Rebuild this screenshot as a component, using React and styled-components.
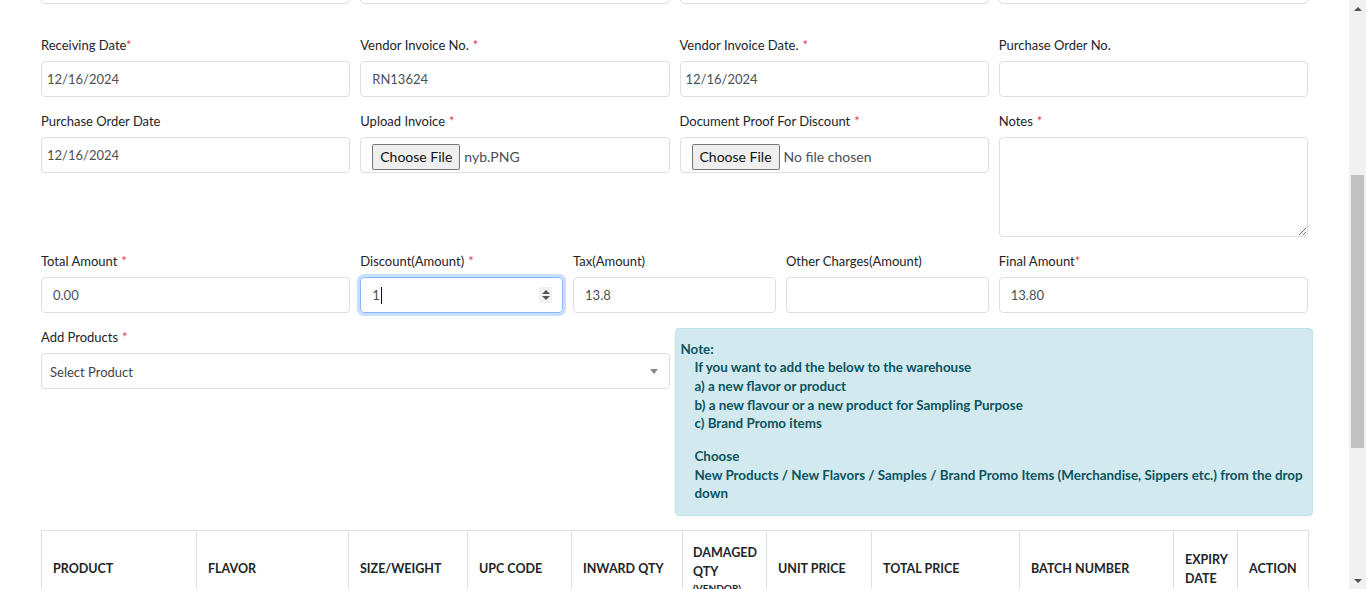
import React, { useLayoutEffect, useRef } from "react";
import styled, { createGlobalStyle } from "styled-components";

const GlobalStyle = createGlobalStyle`
  html, body {
    margin: 0;
    padding: 0;
    height: 100%;
    overflow: hidden;
    background: #fff;
  }
  body {
    font-family: Lato, "Liberation Sans", Arial, sans-serif;
    color: #212529;
  }
  * { box-sizing: border-box; }
`;

const Page = styled.div`
  display: flex;
  height: 100vh;
  width: 100vw;
`;

const Main = styled.div`
  flex: 1;
  overflow: hidden;
`;

const Form = styled.div`
  padding: 20px 41px 120px;
`;

const Section = styled.div`
  margin-top: ${(p) => p.$top || 0}px;
`;

const Row = styled.div`
  display: grid;
  grid-template-columns: repeat(12, 1fr);
  column-gap: 10px;
  margin-bottom: 13.5px;
  align-items: start;
`;

const Field = styled.div`
  grid-column: span ${(p) => p.$span || 3};
  display: flex;
  flex-direction: column;
`;

const Label = styled.label`
  font-size: 13px;
  line-height: 20px;
  height: 20px;
  margin-bottom: 6.5px;
  color: #212529;
  white-space: nowrap;
`;

const Req = styled.span`
  color: #e0404f;
  margin-left: ${(p) => (p.$tight ? "0" : "4px")};
`;

const Input = styled.input`
  height: 36px;
  width: 100%;
  border: 1px solid #dcdfe3;
  border-radius: 4px;
  padding: 0 ${(p) => p.$pad || 11}px;
  font-family: inherit;
  font-size: 13px;
  color: #495057;
  background: #fff;
  outline: none;
`;

const FocusBox = styled.div`
  height: 36px;
  border: 1px solid #86b7fe;
  border-radius: 4px;
  box-shadow: 0 0 0 3px rgba(13, 110, 253, 0.22);
  display: flex;
  align-items: center;
  padding: 0 11px;
  font-size: 13px;
  color: #495057;
`;

const Caret = styled.span`
  display: inline-block;
  width: 1px;
  height: 17px;
  background: #111;
  margin-left: 1px;
`;

const Grow = styled.span`
  flex: 1;
`;

const Spinner = styled.span`
  width: 13px;
  height: 16px;
  background: #f1f1f1;
  display: flex;
  flex-direction: column;
  align-items: center;
  justify-content: center;
  gap: 2px;
  margin-right: -1px;
`;

const Tri = styled.span`
  width: 0;
  height: 0;
  border-left: 4px solid transparent;
  border-right: 4px solid transparent;
  ${(p) =>
    p.$down
      ? "border-top: 4px solid #555;"
      : "border-bottom: 4px solid #555;"}
`;

const FileBox = styled.div`
  height: 36px;
  border: 1px solid #dcdfe3;
  border-radius: 4px;
  display: flex;
  align-items: center;
  padding: 3px 11px 0;
  font-size: 14px;
  color: #495057;
`;

const FileButton = styled.span`
  height: 26px;
  padding: 0 7px;
  display: flex;
  align-items: center;
  background: #efefef;
  border: 1px solid #767676;
  border-radius: 2px;
  color: #111;
  font-size: 14px;
  margin-right: 4px;
`;

const TextArea = styled.textarea`
  height: 100px;
  width: 100%;
  border: 1px solid #dcdfe3;
  border-radius: 4px;
  font-family: inherit;
  font-size: 13px;
  outline: none;
`;

const SelectBox = styled.div`
  height: 36px;
  border: 1px solid #dcdfe3;
  border-radius: 4px;
  display: flex;
  align-items: center;
  padding: 1px 10px 0 8px;
  font-size: 13px;
  color: #444;
`;

const SelectArrow = styled.span`
  width: 0;
  height: 0;
  border-left: 4px solid transparent;
  border-right: 4px solid transparent;
  border-top: 5px solid #888;
  margin-right: 1px;
`;

const Note = styled.div`
  grid-column: span 6;
  margin: 1px -5px 0;
  background: #d1e9ef;
  border: 1px solid #bee5eb;
  border-radius: 4px;
  padding: 11px 5px 12px;
  color: #0c5460;
  font-weight: 700;
  font-size: 13.4px;
  line-height: 18.7px;
  white-space: nowrap;
`;

const NoteBody = styled.div`
  padding-left: 14px;
`;

const NotePara = styled.div`
  margin-top: 14px;
`;

const Table = styled.table`
  width: 100%;
  border-collapse: collapse;
  table-layout: fixed;
  margin-top: 1px;
`;

const Th = styled.th`
  border: 1px solid #dee2e6;
  padding: 12px ${(p) => (p.$tight ? 10 : 11)}px;
  text-align: left;
  vertical-align: middle;
  font-size: 12.5px;
  font-weight: 700;
  line-height: 19px;
  color: #212529;
  text-transform: uppercase;
`;

const Small = styled.span`
  font-size: 10px;
  line-height: 14px;
  display: block;
`;

const ScrollBar = styled.div`
  width: 17px;
  background: #f1f1f1;
  display: flex;
  flex-direction: column;
  align-items: center;
`;

const ScrollArrow = styled.div`
  height: 17px;
  width: 100%;
  display: flex;
  align-items: center;
  justify-content: center;
`;

const ScrollTrack = styled.div`
  flex: 1;
  width: 100%;
  padding: 0 2px;
`;

const Thumb = styled.div`
  background: #c1c1c1;
  height: 273px;
  margin-top: 158px;
`;

const ArrowUp = styled.span`
  width: 0;
  height: 0;
  border-left: 4px solid transparent;
  border-right: 4px solid transparent;
  border-bottom: 4px solid #505050;
`;

const ArrowDown = styled.span`
  width: 0;
  height: 0;
  border-left: 4px solid transparent;
  border-right: 4px solid transparent;
  border-top: 4px solid #505050;
`;

const columns = [
  { w: 155, label: "Product" },
  { w: 152, label: "Flavor" },
  { w: 119, label: "Size/Weight" },
  { w: 104, label: "UPC Code" },
  { w: 111, label: "Inward Qty" },
  { w: 84, label: "damaged", tight: true },
  { w: 105, label: "Unit Price" },
  { w: 148, label: "Total Price" },
  { w: 154, label: "Batch Number" },
  { w: 64, label: "Expiry Date" },
  { w: 71, label: "Action" },
];

const F = ({ label, req, tight, span, children }) => (
  <Field $span={span}>
    <Label>
      {label}
      {req && <Req $tight={tight}>*</Req>}
    </Label>
    {children}
  </Field>
);

export default function App() {
  const mainRef = useRef();
  const rowRef = useRef();

  useLayoutEffect(() => {
    // page shown scrolled so the receiving row starts at y=35
    if (mainRef.current && rowRef.current) {
      mainRef.current.scrollTop = rowRef.current.offsetTop - 35;
    }
  }, []);

  return (
    <>
      <GlobalStyle />
      <Page>
        <Main ref={mainRef}>
          <Form>
            <Row>
              <F label="Vendor" req>
                <Input readOnly value="" />
              </F>
              <F label="Warehouse" req>
                <Input readOnly value="" />
              </F>
              <F label="Location">
                <Input readOnly value="" />
              </F>
              <F label="Received By">
                <Input readOnly value="" />
              </F>
            </Row>
            <Section ref={rowRef} $top={31}>
              <Row>
                <F label="Receiving Date" req tight>
                  <Input $pad={5} readOnly value="12/16/2024" />
                </F>
                <F label="Vendor Invoice No." req>
                  <Input readOnly value="RN13624" />
                </F>
                <F label="Vendor Invoice Date." req>
                  <Input $pad={5} readOnly value="12/16/2024" />
                </F>
                <F label="Purchase Order No.">
                  <Input readOnly value="" />
                </F>
              </Row>
              <Row>
                <F label="Purchase Order Date">
                  <Input $pad={5} readOnly value="12/16/2024" />
                </F>
                <F label="Upload Invoice" req>
                  <FileBox>
                    <FileButton>Choose File</FileButton>
                    nyb.PNG
                  </FileBox>
                </F>
                <F label="Document Proof For Discount" req>
                  <FileBox>
                    <FileButton>Choose File</FileButton>
                    No file chosen
                  </FileBox>
                </F>
                <F label="Notes" req>
                  <TextArea readOnly value="" />
                </F>
              </Row>
              <Row>
                <F label="Total Amount" req>
                  <Input readOnly value="0.00" />
                </F>
                <F label="Discount(Amount)" req span={2}>
                  <FocusBox>
                    1<Caret />
                    <Grow />
                    <Spinner>
                      <Tri />
                      <Tri $down />
                    </Spinner>
                  </FocusBox>
                </F>
                <F label="Tax(Amount)" span={2}>
                  <Input readOnly value="13.8" />
                </F>
                <F label="Other Charges(Amount)" span={2}>
                  <Input readOnly value="" />
                </F>
                <F label="Final Amount" req tight>
                  <Input readOnly value="13.80" />
                </F>
              </Row>
              <Row>
                <F label="Add Products" req span={6}>
                  <SelectBox>
                    <Grow>Select Product</Grow>
                    <SelectArrow />
                  </SelectBox>
                </F>
                <Note>
                  Note:
                  <NoteBody>
                    If you want to add the below to the warehouse
                    <div>a) a new flavor or product</div>
                    <div>b) a new flavour or a new product for Sampling Purpose</div>
                    <div>c) Brand Promo items</div>
                    <NotePara>
                      Choose
                      <div>
                        New Products / New Flavors / Samples / Brand Promo Items
                        (Merchandise, Sippers etc.) from the drop
                        <br />
                        down
                      </div>
                    </NotePara>
                  </NoteBody>
                </Note>
              </Row>
              <Table>
                <colgroup>
                  {columns.map((c) => (
                    <col key={c.label} style={{ width: c.w }} />
                  ))}
                </colgroup>
                <thead>
                  <tr>
                    {columns.map((c) =>
                      c.label === "damaged" ? (
                        <Th key={c.label} $tight>
                          Damaged
                          <br />
                          Qty
                          <Small>(Vendor)</Small>
                        </Th>
                      ) : (
                        <Th key={c.label}>{c.label}</Th>
                      )
                    )}
                  </tr>
                </thead>
              </Table>
            </Section>
          </Form>
        </Main>
        <ScrollBar>
          <ScrollArrow>
            <ArrowUp />
          </ScrollArrow>
          <ScrollTrack>
            <Thumb />
          </ScrollTrack>
          <ScrollArrow>
            <ArrowDown />
          </ScrollArrow>
        </ScrollBar>
      </Page>
    </>
  );
}
